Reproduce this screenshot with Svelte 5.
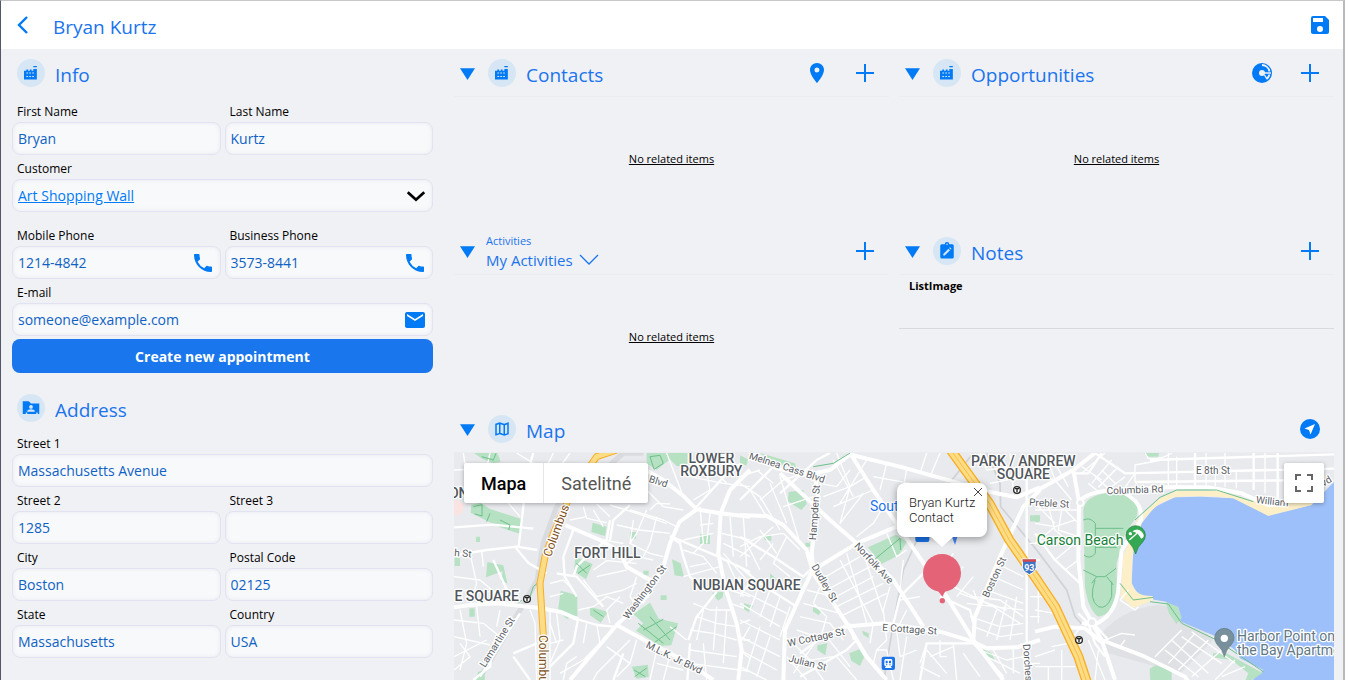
<script>
  let firstName = "Bryan";
  let lastName = "Kurtz";
  let view = "My Activities";
  let mapType = "map";
  let popupOpen = true;

  const addressFields = [
    { id: "street1", label: "Street 1", value: "Massachusetts Avenue", wide: true },
    { id: "street2", label: "Street 2", value: "1285" },
    { id: "street3", label: "Street 3", value: "" },
    { id: "city", label: "City", value: "Boston" },
    { id: "postal", label: "Postal Code", value: "02125" },
    { id: "state", label: "State", value: "Massachusetts" },
    { id: "country", label: "Country", value: "USA" },
  ];

  const phones = [
    { id: "mobile", label: "Mobile Phone", value: "1214-4842" },
    { id: "business", label: "Business Phone", value: "3573-8441" },
  ];

  // Street geometry, split in three sheets that sit side by side
  const sheets = [
    {
      x: 0,
      parks: [
        "M72 129H142L152 155L130 160L96 146Z",
        "M64 284L92 278L118 296L216 328L212 372L150 352L62 308Z",
        "M590 129H712V170L680 168L660 148L620 180L590 160Z",
        "M428 338L470 350L465 378L424 366Z",
        "M376 440L428 462L408 508L372 484Z",
        "M332 542L382 556V618L350 626L324 602Z",
        "M420 590L474 606L452 638L420 616Z",
        "M600 578L626 626L684 640L664 706L632 708L558 662L580 640L550 612Z",
        "M750 372H780V402H750Z",
        "M786 548L820 545L818 562L804 572Z",
        "M545 770L594 764L596 800L560 806Z",
        "M666 448L692 460L702 500L674 496Z",
        "M112 456L160 466L172 520L154 516L158 484L108 502Z",
        "M870 136L896 150L880 168Z",
        "M78 380H90V396H78ZM58 595H74V620H58ZM14 440H30V468H14Z",
        "M580 482H596V496H580ZM632 556H650V570H632ZM540 366H558V386H540Z",
        "M84 786L104 780V810H80Z",
      ],
      major: [
        "M12 592L60 585L140 580L268 594L330 605L384 628",
        "M360 810L500 645L590 560L640 470L660 400L688 336L740 298",
        "M500 645L600 700L700 750L790 810",
        "M560 165L640 210L700 258L740 298L810 310L900 320",
        "M900 180L840 240L812 310L805 430L825 530L860 640L875 720L865 810",
        "M345 345L450 390L510 425L530 470L610 516",
      ],
      mid: [
        "M660 378L805 440L900 486", "M900 146L840 180L740 290",
        "M720 700L712 810M715 690L740 620L800 545",
        "M12 436L110 420L200 410L262 420", "M196 412L236 460L290 490",
        "M130 450L180 560L196 590", "M12 352L130 344L250 356",
        "M250 129L232 190L220 290L206 410", "M320 490L380 500L460 590",
        "M370 360L340 440L344 500L380 560", "M480 330L470 390L410 440L380 470L370 500",
        "M384 628L440 645L490 650", "M384 628L370 700L300 770",
        "M210 610L160 690L90 800", "M70 810L120 770L130 700L190 640",
        "M190 730L260 700M190 740L240 810", "M660 380L690 400L700 440L720 500L760 540",
        "M520 730L490 810", "M540 285L490 330L480 390",
      ],
      minor: [
        "M12 180L120 175L240 220", "M40 129L60 260", "M120 129L110 175L150 250L210 320",
        "M200 129L250 160L330 200", "M310 129L270 210", "M360 129L330 170", "M30 240L150 250L230 240",
        "M12 500L90 510L150 560", "M60 430L80 520L60 590", "M12 540L120 545", "M95 420L100 470",
        "M12 630L100 640L150 680", "M12 680L120 705", "M12 740L110 690", "M30 600L50 700L30 780", "M80 590L90 680",
        "M12 780L60 740L30 700", "M150 600L140 650", "M240 600L255 640L260 810", "M320 610L330 690L300 760",
        "M430 480L470 452L560 460", "M440 440L460 390L520 400", "M440 500L530 480", "M400 510L440 560L520 540L560 520",
        "M560 500L540 560L560 590", "M600 515L580 580", "M610 450L560 440L530 460", "M550 330L540 400L600 430L640 440",
        "M500 345L570 360L660 370", "M590 300L560 370L540 400", "M620 320L600 400L580 440", "M680 350L640 330L540 300",
        "M430 300L460 350", "M400 290L410 325L470 338", "M440 282L480 320M360 330L410 320", "M590 240L640 290L700 300",
        "M600 300L620 280L660 282", "M480 285L560 310L650 340",
        "M300 520L340 510L370 540", "M300 560L340 550", "M385 600L430 590L470 560L520 580",
        "M440 640L450 700L400 750L330 790", "M450 700L420 730M300 640L320 700M300 700L340 690",
        "M410 640L400 700M480 640L470 600L510 560", "M300 600L300 810M340 810L350 760L380 740",
        "M700 260L650 129", "M760 129L780 240L730 270", "M720 200L820 220L900 230", "M740 160L800 190L830 220",
        "M750 290L760 400L730 430", "M780 310L770 400M790 340L750 345M790 370L700 390", "M840 320L850 440M880 320L890 470M815 370L900 390M820 400L900 440",
        "M700 420L760 440L800 490M720 470L770 460M700 500L810 470", "M730 580L780 600L850 600M740 620L800 640L860 650",
        "M720 660L790 670L860 690M760 600L740 690M800 590L790 720M830 600L820 760M720 720L860 740M720 760L870 780M760 700L770 810M660 650L710 690",
        "M620 720L600 810M660 735L640 810M560 690L540 760L500 800M620 760L700 780M540 690L440 790L430 810M470 710L540 760",
        "M870 500L840 540L900 560M840 580L900 600M870 640L900 630M880 690L900 690M880 730L900 745M875 780L900 785",
        "M820 430L900 520M830 450L880 560",
      ],
    },
    {
      x: 870,
      parks: [
        "M146 246L190 240L200 282L184 300L144 274Z", "M384 412L468 374L500 396L476 436L424 462Z",
        "M60 129L164 160L170 176L100 158Z", "M0 138L24 148L20 166L0 160Z", "M70 374H94V392L74 390Z",
        "M328 730L358 718L372 742L360 768L334 752Z", "M220 590L244 604L236 616L218 604Z",
        "M12 580L40 588L26 606L12 598Z", "M232 706L262 700L256 736L232 720Z", "M366 662L386 670V684L370 674Z",
        "M90 490L112 510L92 520Z", "M726 716L756 730L764 752L738 734Z", "M196 398H210V410H196ZM202 436L214 446L206 456Z", "M870 316H900V334H870Z",
      ],
      major: [
        "M20 120L110 175L200 195L270 180L340 126", "M330 129L400 240L510 400L620 560L700 690L790 810",
        "M335 135L480 170L640 215L720 240L830 262L900 232", "M225 200L235 260L215 430L220 480",
        "M0 315L80 318L130 345L200 420L220 490L320 640L380 740L440 810",
        "M220 480L350 400L470 350", "M215 485L180 560L135 660L130 810",
        "M120 190L270 330L350 400L460 510L550 650", "M310 650L430 640L600 665L700 695L740 715L830 712L900 690",
        "M700 690L705 620L780 440L850 290L900 240",
      ],
      mid: [
        "M0 470L60 520L170 590", "M860 150V810", "M120 250L230 150L270 129", "M0 270L100 170",
        "M0 380L100 440L190 500L220 470", "M180 730L250 680L310 650", "M180 800L320 720L350 690",
        "M790 800L700 700L560 700L540 810", "M600 560L690 600L700 640", "M560 480L480 560L460 640",
      ],
      minor: [
        "M60 270L130 210L220 180", "M0 220L60 260L120 360", "M30 240L80 320M90 220L140 340M120 200L180 400", "M50 180L100 220M0 200L60 180",
        "M160 230L210 270M130 290L220 260M240 220L290 230L330 180M250 260L330 230L380 200", "M290 129L330 230L300 340M380 150L300 280M400 240L280 290",
        "M280 150L340 260M440 160L420 240M500 175L490 240M560 129L540 190M600 129L570 200M400 200L620 240", "M430 290L400 340L350 380M370 250L300 340",
        "M0 410L60 380L130 370L180 420M0 440L100 350M20 400L60 480M60 360L110 430M100 400L60 450M140 380L100 460L150 500",
        "M40 500L0 560M60 520L30 600M90 540L60 620M120 560L90 650M150 590L120 680M0 540L140 610M0 580L120 650M0 630L120 690",
        "M0 680L120 740M0 720L110 780M30 650L0 700M60 650L20 780M90 680L50 800M0 770L80 810",
        "M240 510L360 440M260 540L390 470M270 570L400 500M290 590L430 520M300 620L440 550M320 430L350 530L380 640M300 450L400 640M370 430L430 610",
        "M200 540L280 560M190 580L300 610M180 620L270 640L310 690M170 660L230 680M240 530L220 580L260 620L240 690",
        "M150 690L230 770M140 740L200 810M150 760L280 740M160 790L230 690M200 740L250 810M260 680L330 770M290 740L350 810",
        "M450 530L430 600L440 690L410 720L400 760M410 720L440 720L460 810M480 570L540 560M500 600L470 660L480 740",
        "M490 450L480 540M440 370L470 440L500 420M400 640L390 700M330 640L340 690",
        "M600 690L600 740L620 740M560 700L540 760M640 700L650 810M570 740L640 710M540 770L600 800M480 740L530 720M500 680L480 810M670 730L720 800M560 720L620 790",
        "M620 540L670 470M650 560L700 500M590 500L640 430", "M640 530L760 590L840 640M660 550L800 600M680 580L850 600M690 620L780 650L850 640M700 650L780 680L850 670",
        "M720 590L700 540M770 600L740 680M800 570L770 690M830 560L810 690M700 560L780 570L850 620M790 470L850 500M760 500L850 540M740 540L850 580",
        "M720 720L800 750L850 740M740 740L840 790M760 720L800 790M820 712V790M870 200L900 180M870 400H900M870 450H900M870 560H900M870 620H900M870 760H900",
        "M650 129L700 200M720 129L740 180L820 170M810 129L820 240M750 220L850 200M640 210L690 240",
      ],
    },
    {
      x: 1755,
      parks: [
        "M145 300Q150 260 210 250H285Q315 270 305 320L270 370L245 460V560Q235 610 190 620Q160 600 150 530Z",
        "M325 129H372L370 140H340Z", "M392 576L430 590L440 624L424 642L402 610Z", "M344 776L362 766L410 780V810H346Z",
        "M0 316H12V336H0Z", "M534 730L572 728L670 782L684 788L650 810H632L640 790L590 750L534 742Z",
      ],
      major: [
        "M132 275Q160 242 250 240L400 232L520 232L620 250L700 285L760 284", "M132 275L130 450L145 590L200 690L240 810",
        "M270 250Q325 280 318 330L260 420L250 540Q240 620 175 645L140 640", "M200 690L330 740L450 800L460 815",
        "M115 180L132 275", "M0 665L60 650L150 655L205 700",
        "M0 245L115 180L180 129",
      ],
      mid: [
        "M180 129L270 190L400 187L580 183L897 176", "M300 216L750 211", "M345 150L897 133", "M200 129L160 190L120 190",
        "M135 520L60 450L0 370", "M480 129V230M656 129V240M728 129V270", "M130 610L160 640L180 700L210 740M175 640L220 690",
      ],
      minor: [
        "M400 129V232M425 140V232M513 129V225M541 180V228M570 129V230M604 180V235M690 129V250", "M380 150L300 165V216M330 129L340 145Q380 150 410 129",
        "M200 180L240 220M180 200L220 235M160 220L190 245M240 180L190 232M270 200L220 238M300 190L270 232M140 170L200 210",
        "M210 129L140 190M230 150L170 220M250 170L190 232", "M0 300H130M0 280L60 340M40 290L60 360L120 410M80 300L70 360L130 380M0 340L60 350L120 330M90 300L130 340M0 400L60 350",
        "M0 200L60 210M30 129L60 210L110 270M60 160L100 230M0 170L50 129M80 129L30 190", "M60 450L120 400M90 480L130 450",
        "M0 560H40M10 530V640M0 600L60 610M130 660L100 700L50 710M0 770H120M40 770V810M80 720V810M0 740L60 720M120 720L140 700",
        "M190 720L180 810M160 690L210 810M210 690L260 670L300 675M255 710L270 690", "M440 660L380 720L360 740M480 670L400 760M520 690L430 780M560 720L470 800M410 690L520 790M390 720L490 800M440 680L560 760M470 665L600 760M600 750L540 810M560 800L630 770",
        "M255 570L300 600L310 590M280 540L255 570",
      ],
    },
  ];

  const hoods = [
    { x: 472, y: 443, text: "FORT HILL" },
    { x: 784, y: 159, text: "LOWER" },
    { x: 784, y: 198, text: "ROXBURY" },
    { x: 890, y: 539, text: "NUBIAN SQUARE" },
    { x: 110, y: 572, text: "E SQUARE" },
    { x: 1720, y: 168, text: "PARK / ANDREW" },
    { x: 1720, y: 207, text: "SQUARE" },
    { x: 26, y: 264, text: "ON" },
  ];

  const streets = [
    { x: 38, y: 440, r: 5, text: "h St" },
    { x: 150, y: 702, r: -58, text: "Lamartine St" },
    { x: 592, y: 552, r: -53, text: "Washington St" },
    { x: 668, y: 752, r: 26, text: "M.L.K. Jr Blvd" },
    { x: 622, y: 224, r: 18, text: "Blvd" },
    { x: 1008, y: 182, r: 18, text: "Melnea Cass Blvd" },
    { x: 1104, y: 308, r: -86, text: "Hampden St" },
    { x: 1115, y: 524, r: 60, text: "Dudley St" },
    { x: 1264, y: 466, r: 47, text: "Norfolk Ave" },
    { x: 1100, y: 692, r: -12, text: "W Cottage St" },
    { x: 1070, y: 768, r: 14, text: "Julian St" },
    { x: 1378, y: 668, r: 4, text: "E Cottage St" },
    { x: 1642, y: 506, r: -65, text: "Boston St" },
    { x: 1724, y: 776, r: 86, text: "Dorchester" },
    { x: 1797, y: 290, r: 3, text: "Preble St" },
    { x: 2055, y: 250, r: -2, text: "Columbia Rd" },
    { x: 2289, y: 192, r: 0, text: "E 8th St" },
    { x: 2466, y: 284, r: 6, text: "William" },
    { x: 2634, y: 222, r: -32, text: "vd" },
  ];

  const stations = [
    { x: 231, y: 567 },
    { x: 1701, y: 240 },
    { x: 1887, y: 690 },
  ];

  const highway = "M1495 110L1618 280L1678 390L1758 505L1815 590L1885 740L1915 830";
  const columbus = "M500 120L440 140L390 210L350 280L310 370L285 440L270 520L275 600L280 680L278 830";
</script>

{#snippet icon(name)}
  <svg class="icon icon-{name}" viewBox="0 0 24 24" aria-hidden="true">
    {#if name === "factory"}
      <path fill-rule="evenodd" d="M0 8h4V6h3v2h3V6h3v2h3V5h6v18H0zM4 11v2h3v-2zm5 0v2h3v-2zm5 0v2h3v-2zM4 17v2h3v-2zm5 0v2h3v-2zm5 0v2h3v-2zM16 0h6v2h-6z" />
    {:else if name === "folder"}
      <path fill-rule="evenodd" d="M1 3h8l3 3h11v14h-2v-2h-2v2H7v-2H5v2H1zM12 8a2.500 2.500 0 1 0 0 5 2.500 2.500 0 0 0 0-5zm-5 9h10v-1c0-1.500-3-2.500-5-2.500s-5 1-5 2.500z" />
    {:else if name === "note"}
      <path fill-rule="evenodd" d="M5 3h4a3 3 0 0 1 6 0h4a2 2 0 0 1 2 2v15a2 2 0 0 1-2 2H5a2 2 0 0 1-2-2V5a2 2 0 0 1 2-2zm7-1a1 1 0 1 0 0 2 1 1 0 0 0 0-2zM7 16v2h2l7-7-2-2zm8-8 2 2 1-1-2-2z" />
    {:else if name === "map"}
      <path fill-rule="evenodd" d="M20.500 3 15 5.100 9 3 3 5v16l6-2.100 6 2.100 6-2V3zM10 5.500l4 1.400v11.600l-4-1.400zM5 6.500l3-1v11.700l-3 1zm14 11-3 1V6.900l3-1z" />
    {:else if name === "pin"}
      <path fill-rule="evenodd" d="M12 2C8.100 2 5 5.100 5 9c0 5.200 7 13 7 13s7-7.800 7-13c0-3.900-3.100-7-7-7zm0 9.500a2.500 2.500 0 1 1 0-5 2.500 2.500 0 0 1 0 5z" />
    {:else if name === "plus"}
      <path d="M11 3h2v8h8v2h-8v8h-2v-8H3v-2h8z" />
    {:else if name === "chart"}
      <circle cx="12" cy="12" r="10" />
      <g fill="none" stroke="#f0f1f4">
        <circle cx="12" cy="12" r="3" fill="#f0f1f4" stroke="none" />
        <path d="M12 4a8 8 0 0 1 7.500 6.500M19.500 13.500a8 8 0 0 1-3 4.500" stroke-width="1.800" />
        <path d="M14 12h7M14.500 14l2.500 4" stroke-width="1.400" />
      </g>
    {:else if name === "locate"}
      <circle cx="12" cy="12" r="10" />
      <path d="M17 7 6.500 11.500l4.500 1.500 1.500 4.500z" fill="#fff" />
    {:else if name === "save"}
      <path fill-rule="evenodd" d="M17 3H5a2 2 0 0 0-2 2v14c0 1.100.9 2 2 2h14a2 2 0 0 0 2-2V7zM12 19a3 3 0 1 1 0-6 3 3 0 0 1 0 6zm3-10H5V5h10z" />
    {:else if name === "phone"}
      <path d="M20 15.500c-1.200 0-2.400-.2-3.600-.6-.3-.1-.7 0-1 .2l-2.200 2.200a15.100 15.100 0 0 1-6.600-6.600l2.200-2.200c.3-.3.400-.7.2-1C8.700 6.400 8.500 5.200 8.500 4c0-.6-.4-1-1-1H4c-.6 0-1 .4-1 1 0 9.400 7.600 17 17 17 .6 0 1-.4 1-1v-3.500c0-.6-.4-1-1-1z" />
    {:else if name === "mail"}
      <path fill-rule="evenodd" d="M20 4H4a2 2 0 0 0-2 2v12c0 1.100.9 2 2 2h16a2 2 0 0 0 2-2V6a2 2 0 0 0-2-2zm0 4-8 5-8-5V6l8 5 8-5z" />
    {:else if name === "back"}
      <path d="m16 4-8 8 8 8" fill="none" stroke="currentColor" stroke-width="2.400" />
    {:else if name === "chevron"}
      <path d="m3 8 9 8 9-8" fill="none" stroke="currentColor" stroke-width="3" />
    {:else if name === "thin-chevron"}
      <path d="m3 7 9 9 9-9" fill="none" stroke="currentColor" stroke-width="1.300" />
    {:else if name === "triangle"}
      <path d="M0 5h24L12 24z" />
    {/if}
  </svg>
{/snippet}

{#snippet heading(title, glyph)}
  <button class="toggle" aria-label="Collapse {title}">{@render icon("triangle")}</button>
  <span class="badge">{@render icon(glyph)}</span>
  <h2>{title}</h2>
{/snippet}

<div class="app">
  <header class="topbar">
    <button class="icon-button" aria-label="Back">{@render icon("back")}</button>
    <h1>{firstName} {lastName}</h1>
    <button class="icon-button" aria-label="Save">{@render icon("save")}</button>
  </header>

  <div class="content">
    <form class="details" on:submit|preventDefault>
      <div class="group-head first">
        <span class="badge">{@render icon("factory")}</span>
        <h2>Info</h2>
      </div>
      <div class="fields">
        <div class="field">
          <label for="first">First Name</label>
          <div class="box"><input id="first" bind:value={firstName} /></div>
        </div>
        <div class="field">
          <label for="last">Last Name</label>
          <div class="box"><input id="last" bind:value={lastName} /></div>
        </div>
        <div class="field wide customer">
          <label for="customer">Customer</label>
          <div class="box">
            <a class="lookup" href="#customer">Art Shopping Wall</a>
            <button type="button" id="customer" class="pick" aria-label="Choose customer">{@render icon("chevron")}</button>
          </div>
        </div>
        {#each phones as phone}
          <div class="field">
            <label for={phone.id}>{phone.label}</label>
            <div class="box">
              <input id={phone.id} type="tel" bind:value={phone.value} />
              <a href="tel:{phone.value}" aria-label="Call {phone.label}">{@render icon("phone")}</a>
            </div>
          </div>
        {/each}
        <div class="field wide">
          <label for="email">E-mail</label>
          <div class="box">
            <input id="email" type="email" value="someone@example.com" />
            <a href="mailto:someone@example.com" aria-label="Send e-mail">{@render icon("mail")}</a>
          </div>
        </div>
      </div>
      <button type="button" class="primary">Create new appointment</button>

      <div class="group-head">
        <span class="badge">{@render icon("folder")}</span>
        <h2>Address</h2>
      </div>
      <div class="fields">
        {#each addressFields as field}
          <div class="field" class:wide={field.wide}>
            <label for={field.id}>{field.label}</label>
            <div class="box"><input id={field.id} bind:value={field.value} /></div>
          </div>
        {/each}
      </div>
    </form>

    <main class="related">
      <section class="panel">
        <div class="panel-head">
          {@render heading("Contacts", "factory")}
          <button class="icon-button" aria-label="Show on map">{@render icon("pin")}</button>
          <button class="icon-button" aria-label="Add contact">{@render icon("plus")}</button>
        </div>
        <div class="empty"><a href="#contacts">No related items</a></div>
      </section>

      <section class="panel">
        <div class="panel-head">
          {@render heading("Opportunities", "factory")}
          <button class="icon-button" aria-label="Show chart">{@render icon("chart")}</button>
          <button class="icon-button" aria-label="Add opportunity">{@render icon("plus")}</button>
        </div>
        <div class="empty"><a href="#opportunities">No related items</a></div>
      </section>

      <section class="panel">
        <div class="panel-head">
          <button class="toggle" aria-label="Collapse Activities">{@render icon("triangle")}</button>
          <div class="view">
            <label for="view">Activities</label>
            <div class="view-pick">
              <select id="view" bind:value={view}>
                <option>My Activities</option>
              </select>
              {@render icon("thin-chevron")}
            </div>
          </div>
          <button class="icon-button" aria-label="Add activity">{@render icon("plus")}</button>
        </div>
        <div class="empty"><a href="#activities">No related items</a></div>
      </section>

      <section class="panel">
        <div class="panel-head">
          {@render heading("Notes", "note")}
          <button class="icon-button" aria-label="Add note">{@render icon("plus")}</button>
        </div>
        <div class="note-row">ListImage</div>
      </section>

      <section class="map-panel">
        <div class="panel-head">
          {@render heading("Map", "map")}
          <button class="icon-button" aria-label="Navigate">{@render icon("locate")}</button>
        </div>
        <div class="map-view">
          <svg class="tiles" viewBox="12 129 2640 681" preserveAspectRatio="xMinYMin slice" role="img" aria-label="Street map of Boston">
            <rect x="0" y="0" width="2700" height="900" fill="#e8eaed" />
            <path d="M1940 690Q2000 600 2120 585L2200 590L2290 690L2190 790L1975 730Z" fill="#dfe1e5" />
            <path d="M12 266L44 284L34 312L12 318Z" fill="#fbe3e1" />
            <path d="M2700 190L2652 215L2585 285L2455 315L2350 265L2255 260L2175 262L2115 290L2075 340L2050 420L2045 520L2065 555L2105 568L2150 576L2195 636L2300 680L2355 720L2370 745L2440 780L2402 815H2700Z" fill="#9dc0fa" />
            <path d="M2604 240L2585 285L2455 318L2350 265Q2250 252 2175 262Q2110 280 2075 340Q2040 420 2045 520Q2055 560 2108 558L2110 570L2050 594L2012 560L2020 440L2060 330L2130 265L2180 243H2310L2460 288Z" fill="#fdefc8" />
            <path d="M320 290L280 400L262 510L210 600L80 820M580 129L520 129L480 165M320 290L380 220L440 170" fill="none" stroke="#d9dbdf" stroke-width="16" />
            <path d="M1570 129L1490 230L1410 370L1360 480L1330 640L1300 820M1610 129L1650 220L1652 290L1760 420L1850 540L1875 620L1930 680" fill="none" stroke="#cfd2d6" stroke-width="5" />

            {#each sheets as sheet}
              <g transform="translate({sheet.x} 0)">
                {#each sheet.parks as d}<path class="park" {d} />{/each}
                {#each sheet.minor as d}<path class="road minor" {d} />{/each}
                {#each sheet.mid as d}<path class="road mid" {d} />{/each}
                {#each sheet.major as d}<path class="road major" {d} />{/each}
              </g>
            {/each}

            <g class="trails">
              <path d="M2055 330L2130 262L2180 240H2300L2410 275M2010 520L2050 570L2110 562M2100 575L2155 582L2195 640L2300 690L2440 785" />
              <path d="M1900 330Q1920 320 1936 340V430Q1920 450 1902 435M1936 355H2020M1936 412H2000M1900 480L1940 500H1965L1998 475M1935 510Q1915 570 1945 590Q1970 600 1985 560V515M1940 500L1925 520M1970 500L1990 525" />
              <path d="M70 290L96 284V318L74 312M120 310L110 335M150 330L180 345L176 360M95 140L130 150L138 130M600 140L630 136L640 160L612 178Z" />
              <path d="M380 460L410 490M384 490L420 465M565 640L640 700M600 620L660 690M580 660L640 628M610 700L680 650M430 600L460 620M552 780L586 800M554 800L590 774" />
              <path d="M240 560L250 530L268 515M205 580L215 570M1260 460L1350 385L1352 420M1090 170L1150 160L1200 129" />
            </g>

            <path d={columbus} class="highway casing" />
            <path d={columbus} class="highway" />
            <path d={highway} class="highway casing broad" />
            <path d={highway} class="highway broad" />
            <path d={highway} class="median" />
            <circle cx="1891" cy="278" r="10" class="circle" />
            <circle cx="1926" cy="637" r="12" class="circle" />

            {#each hoods as hood}
              <text class="hood" x={hood.x} y={hood.y}>{hood.text}</text>
            {/each}
            {#each streets as street}
              <text class="street" transform="translate({street.x} {street.y}) rotate({street.r})">{street.text}</text>
            {/each}
            <text class="street route" transform="translate(330 366) rotate(-70)">Columbus</text>
            <text class="street route" transform="translate(266 756) rotate(90)">Columbus</text>

            {#each stations as station}
              <g transform="translate({station.x} {station.y})">
                <circle r="10" fill="#fff" stroke="#222" stroke-width="4" />
                <path d="M-6 -4H6M0 -4V7" stroke="#222" stroke-width="4" />
              </g>
            {/each}

            <text class="poi transit" x="1260" y="303">Sout</text>
            <rect x="1396" y="356" width="42" height="40" rx="6" fill="#1a73e8" />
            <path d="M1504 375H1524L1515 404Z" fill="#4285f4" />
            <g transform="translate(1315 760)">
              <rect x="-20" y="-20" width="40" height="40" rx="6" fill="#1a73e8" />
              <path fill-rule="evenodd" d="M-8 -13H8Q12 -13 12 -8V6L7 10L11 14H-11L-7 10L-12 6V-8Q-12 -13 -8 -13ZM-8 -8V0H-2V-8ZM2 -8V0H8V-8ZM-7 3V6H-3V3ZM3 3V6H7V3Z" fill="#fff" />
            </g>

            <path d="M1716 447H1760L1758 462Q1764 482 1738 494Q1712 482 1718 462Z" fill="#3f73c8" stroke="#fff" stroke-width="3" />
            <path d="M1718 448H1758V455H1718Z" fill="#d8484a" />
            <text class="shield" x="1738" y="482">93</text>

            <text class="poi beach" x="1760" y="405">Carson Beach</text>
            <path d="M2057 432Q2050 410 2036 396A29 29 0 1 1 2078 396Q2062 410 2057 432Z" fill="#34a853" stroke="#188038" stroke-width="2" />
            <circle cx="2041" cy="371" r="5" fill="#fff" />
            <path d="M2038 390L2062 369" fill="none" stroke="#fff" stroke-width="4" />
            <path d="M2047 364Q2064 352 2076 366T2074 386L2062 370Z" fill="#fff" />
            <path d="M2323 740Q2318 718 2302 704A29 29 0 1 1 2344 704Q2328 718 2323 740Z" fill="#78909c" stroke="#62757f" stroke-width="2" />
            <circle cx="2323" cy="685" r="11" fill="#fff" />
            <text class="poi place" x="2361" y="692">Harbor Point on</text>
            <text class="poi place" x="2361" y="734">the Bay Apartments</text>

            <g fill="#e46377">
              <circle cx="1476" cy="489" r="57" />
              <path d="M1462 540L1477 560L1488 540Z" />
              <circle cx="1477" cy="572" r="8" />
            </g>
          </svg>

          <div class="map-types">
            <button class:active={mapType === "map"} on:click={() => (mapType = "map")}>Mapa</button>
            <button class:active={mapType === "sat"} on:click={() => (mapType = "sat")}>Satelitné</button>
          </div>
          <button class="fullscreen" aria-label="Fullscreen">
            <svg viewBox="0 0 18 18" aria-hidden="true"><path d="M0 0v6h2V2h4V0zm16 0h-4v2h4v4h2V0zm0 16h-4v2h6v-6h-2zM2 12H0v6h6v-2H2z" /></svg>
          </button>
          {#if popupOpen}
            <div class="popup">
              <p>Bryan Kurtz</p>
              <p>Contact</p>
              <button aria-label="Close" on:click={() => (popupOpen = false)}>
                <svg viewBox="0 0 10 10" aria-hidden="true"><path d="m1 1 8 8M9 1 1 9" /></svg>
              </button>
            </div>
          {/if}
        </div>
      </section>
    </main>
  </div>
</div>

<style>
  :global(body) {
    margin: 0;
    background: #f0f1f4;
  }

  .app {
    --blue: #007af5;
    display: flex;
    flex-direction: column;
    box-sizing: border-box;
    height: 100vh;
    overflow: hidden;
    border-top: 1px solid #c8c8c8;
    border-left: 1px solid #55566a;
    border-right: 2px solid #b9b9bb;
    background: #f0f1f4;
    color: #000;
    font-family: "Open Sans", "Noto Sans", sans-serif;
    font-size: 12px;
  }

  h1,
  h2,
  p {
    margin: 0;
    font-weight: 400;
  }

  h1,
  h2 {
    flex: 1;
    color: #1a74ee;
    font-size: 19px;
    line-height: 28px;
  }

  button {
    padding: 0;
    border: 0;
    background: none;
    color: inherit;
    font: inherit;
    cursor: pointer;
  }

  .icon {
    display: block;
    width: 24px;
    height: 24px;
    fill: currentColor;
  }

  .icon-button {
    flex: none;
    color: var(--blue);
  }

  .topbar {
    display: flex;
    flex: none;
    align-items: center;
    gap: 18px;
    height: 48px;
    padding: 0 11px 0 10px;
    background: #fff;
  }

  .topbar h1 {
    padding-top: 4px;
  }

  .content {
    display: flex;
    flex: 1;
    gap: 21px;
    min-height: 0;
    padding: 0 9px 0 11px;
  }

  .details {
    flex: 0 0 421px;
    min-width: 0;
  }

  .group-head {
    display: flex;
    align-items: center;
    gap: 10px;
    margin-top: 11px;
    padding: 10px 5px 8px;
  }

  .group-head.first {
    margin-top: 0;
    padding-bottom: 11px;
  }

  .group-head h2 {
    height: 24px;
  }

  .badge {
    display: grid;
    flex: none;
    place-items: center;
    width: 28px;
    height: 28px;
    border-radius: 50%;
    background: #d7e6f4;
    color: var(--blue);
  }

  .badge .icon {
    width: 18px;
    height: 18px;
  }

  .badge .icon-factory {
    width: 14px;
    height: 14px;
  }

  .fields {
    display: grid;
    grid-template-columns: minmax(0, 1fr) minmax(0, 1fr);
    column-gap: 4px;
  }

  .wide {
    grid-column: 1 / -1;
  }

  .customer {
    margin-bottom: 10px;
  }

  .field label {
    display: block;
    padding: 4px 5px 0;
    line-height: 20px;
    font-weight: 500;
  }

  .box {
    display: flex;
    align-items: center;
    box-sizing: border-box;
    height: 33px;
    padding: 0 5px;
    border: 1px solid #e1e2f2;
    border-radius: 8px;
    background: #f8f9fb;
    box-shadow: inset 0 0 4px #e8e9ee;
    color: #0f62c4;
    font-size: 14px;
  }

  .box input {
    flex: 1;
    min-width: 0;
    padding: 0;
    border: 0;
    outline: 0;
    background: none;
    color: inherit;
    font: inherit;
  }

  .box a {
    color: var(--blue);
  }

  .lookup {
    flex: 1;
  }

  .pick {
    color: #000;
  }

  .box .icon-chevron {
    width: 22px;
    height: 22px;
  }

  .primary {
    display: block;
    width: 100%;
    height: 34px;
    margin-top: 3px;
    border-radius: 8px;
    background: #1976ec;
    color: #fff;
    font-size: 14px;
    font-weight: 700;
  }

  .related {
    display: grid;
    flex: 1;
    grid-template-columns: minmax(0, 1fr) minmax(0, 1fr);
    grid-template-rows: 178px 178px 1fr;
    column-gap: 10px;
    min-width: 0;
  }

  .panel {
    display: flex;
    flex-direction: column;
  }

  .panel-head {
    display: flex;
    flex: none;
    align-items: center;
    box-sizing: border-box;
    height: 48px;
    padding: 0 12px 0 6px;
    border-bottom: 1px solid #ebecef;
  }

  .panel-head h2 {
    padding-top: 4px;
  }

  .panel-head .icon-button + .icon-button {
    margin-left: 24px;
  }

  .panel-head .badge {
    margin: 0 10px 0 13px;
  }

  .toggle {
    flex: none;
    color: var(--blue);
  }

  .toggle .icon {
    width: 15px;
    height: 15px;
  }

  .empty {
    display: flex;
    flex: 1;
    align-items: center;
    justify-content: center;
    padding-bottom: 8px;
  }

  .empty a {
    color: #000;
    font-size: 11px;
  }

  .view {
    flex: 1;
    margin-left: 11px;
    color: #1a74ee;
  }

  .view label {
    display: block;
    font-size: 11px;
    line-height: 18px;
  }

  .view-pick {
    display: flex;
    align-items: center;
    gap: 4px;
    height: 20px;
  }

  .view select {
    padding: 0;
    border: 0;
    appearance: none;
    background: none;
    color: inherit;
    font: inherit;
    font-size: 15px;
  }

  .note-row {
    height: 53px;
    padding: 0 10px;
    border-bottom: 1px solid #d9dadd;
    font-weight: 700;
    font-size: 11px;
    line-height: 22px;
  }

  .map-panel {
    display: flex;
    flex-direction: column;
    grid-column: 1 / -1;
    min-height: 0;
  }

  .map-view {
    position: relative;
    flex: 1;
    min-height: 0;
    overflow: hidden;
    font-family: Roboto, sans-serif;
  }

  .tiles {
    display: block;
    width: 100%;
    height: 100%;
  }

  .park {
    fill: #b6e1c3;
  }

  .road,
  .highway,
  .median {
    fill: none;
    stroke: #fff;
    stroke-linejoin: round;
  }

  .minor {
    stroke-width: 4;
  }

  .mid {
    stroke-width: 7;
  }

  .major {
    stroke-width: 12;
  }

  .highway {
    stroke: #fddc86;
    stroke-width: 15;
  }

  .highway.casing {
    stroke: #f7ae25;
    stroke-width: 21;
  }

  .highway.broad {
    stroke-width: 22;
  }

  .highway.casing.broad {
    stroke-width: 30;
  }

  .median {
    stroke: #f7ae25;
    stroke-width: 2;
  }

  .trails {
    fill: none;
    stroke: #6cc08a;
    stroke-width: 3;
  }

  .circle {
    fill: #e8eaed;
    stroke: #fff;
    stroke-width: 6;
  }

  .tiles text {
    paint-order: stroke;
    stroke: #fff;
    stroke-width: 8;
    stroke-linejoin: round;
  }

  .hood {
    fill: #51565c;
    font-size: 42px;
    font-weight: 500;
    text-anchor: middle;
  }

  .street {
    fill: #5b6066;
    font-size: 30px;
    text-anchor: middle;
  }

  .route {
    fill: #80501a;
    font-size: 36px;
  }

  .poi {
    font-size: 42px;
  }

  .transit {
    fill: #1a73e8;
  }

  .beach {
    fill: #188038;
  }

  .place {
    fill: #5f7885;
  }

  .tiles .shield {
    fill: #fff;
    stroke: none;
    font-size: 27px;
    font-weight: 700;
    text-anchor: middle;
  }

  .map-types {
    position: absolute;
    top: 10px;
    left: 10px;
    display: flex;
    border-radius: 2px;
    background: #fff;
    box-shadow: 0 1px 4px rgba(0, 0, 0, 0.3);
  }

  .map-types button {
    height: 40px;
    padding: 0 17px;
    color: #565656;
    font-size: 18px;
  }

  .map-types button + button {
    border-left: 1px solid #e6e6e6;
  }

  .map-types .active {
    color: #000;
    font-weight: 500;
  }

  .fullscreen {
    position: absolute;
    top: 10px;
    right: 10px;
    display: grid;
    place-items: center;
    width: 40px;
    height: 40px;
    border-radius: 2px;
    background: #fff;
    box-shadow: 0 1px 4px rgba(0, 0, 0, 0.3);
  }

  .fullscreen svg {
    width: 18px;
    fill: #666;
  }

  /* Anchored to the marker, so it scales with the map width */
  .popup {
    position: absolute;
    top: 30px;
    left: calc(55.45% - 45px);
    box-sizing: border-box;
    width: 90px;
    height: 54px;
    padding: 12px 0 0 12px;
    border-radius: 8px;
    background: #fff;
    box-shadow: 0 2px 7px 1px rgba(0, 0, 0, 0.3);
    color: #222;
    font-size: 13px;
    line-height: 15px;
  }

  .popup p {
    font-weight: 300;
    white-space: nowrap;
  }

  .popup::after {
    position: absolute;
    top: 100%;
    left: 34px;
    border: 11px solid transparent;
    border-top: 10px solid #fff;
    border-bottom: 0;
    content: "";
  }

  .popup button {
    position: absolute;
    top: 4px;
    right: 4px;
    width: 10px;
    height: 10px;
  }

  .popup svg {
    display: block;
    fill: none;
    stroke: #444;
  }
</style>
